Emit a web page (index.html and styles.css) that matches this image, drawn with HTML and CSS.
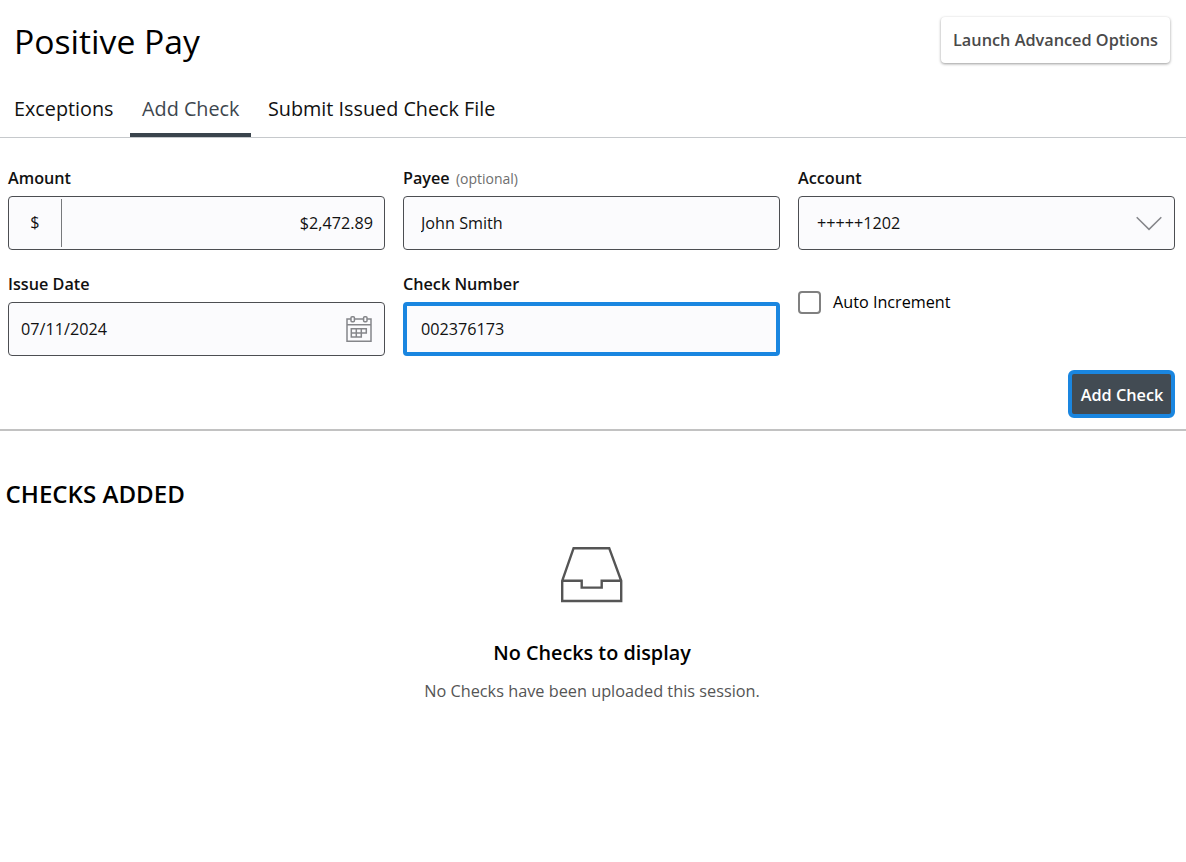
FILE: index.html
```html
<!DOCTYPE html>
<html lang="en">
  <head>
    <meta charset="UTF-8" />
    <meta name="viewport" content="width=device-width, initial-scale=1.0" />
    <title>Positive Pay</title>
    <link rel="stylesheet" href="styles.css">
  </head>
  <body>
    <header class="header">
      <h1>Positive Pay</h1>
      <button type="button" class="btn-launch">Launch Advanced Options</button>
    </header>

    <nav class="tabs">
      <a class="tab">Exceptions</a>
      <a class="tab active">Add Check</a>
      <a class="tab">Submit Issued Check File</a>
    </nav>

    <form class="check-form">
      <div class="form-grid">
        <div class="form-group">
          <label for="amount">Amount</label>
          <div class="field">
            <span class="prefix">$</span>
            <input type="text" id="amount" class="amount" value="$2,472.89" />
          </div>
        </div>
        <div class="form-group">
          <label for="payee">Payee <span class="optional">(optional)</span></label>
          <div class="field">
            <input type="text" id="payee" class="payee" value="John Smith" />
          </div>
        </div>
        <div class="form-group">
          <label for="account">Account</label>
          <div class="field">
            <input type="text" id="account" class="account" value="+++++1202" readonly />
            <svg class="chevron" width="26" height="15" viewBox="0 0 26 15">
              <path d="M0.7 1.2 L13 13.4 L25.3 1.2" />
            </svg>
          </div>
        </div>
        <div class="form-group">
          <label for="issueDate">Issue Date</label>
          <div class="field">
            <input type="text" id="issueDate" class="date" value="07/11/2024" />
            <svg class="calendar" width="26" height="26" viewBox="0 0 26 26">
              <path d="M5 3H1V25.2H25V3H21M8.5 3H17.5M1 8.7H25" />
              <rect x="5" y="0.8" width="3.4" height="5" rx="1" />
              <rect x="17.6" y="0.8" width="3.4" height="5" rx="1" />
              <path d="M5.3 12.8H20.3V17H15.3V21H5.3ZM5.3 17H15.3M10.3 12.8V21M15.3 12.8V17" />
            </svg>
          </div>
        </div>
        <div class="form-group">
          <label for="checkNumber">Check Number</label>
          <div class="field focused">
            <input type="text" id="checkNumber" class="number" value="002376173" />
          </div>
        </div>
        <label class="checkbox">
          <input type="checkbox" />
          Auto Increment
        </label>
      </div>
      <button type="button" class="btn-add">Add Check</button>
    </form>

    <section class="checks">
      <h2>CHECKS ADDED</h2>
      <div class="empty">
        <svg width="62" height="56" viewBox="0 0 62 56">
          <path d="M1.2 33.8L12.6 1.2H48.2L60.2 33.8V54H1.2ZM1.2 33.8H20.7V40.6H40.7V33.8H60.2" />
        </svg>
        <h3>No Checks to display</h3>
        <p>No Checks have been uploaded this session.</p>
      </div>
    </section>
  </body>
</html>
```

FILE: styles.css
```css
* {
  box-sizing: border-box;
}
body {
  margin: 0;
  font-family: "Open Sans", "Noto Sans", sans-serif;
  font-size: 16.2px;
  color: #111;
  background-color: #fff;
}
h1,
h2,
h3,
p {
  margin: 0;
}
svg {
  fill: none;
  stroke: #85868a;
  stroke-width: 1.5;
  flex-shrink: 0;
}
.header {
  display: flex;
  justify-content: space-between;
  align-items: flex-start;
  height: 81px;
  padding: 17px 16px 0 14px;
}
h1 {
  font-size: 33.7px;
  font-weight: 400;
  line-height: 48px;
  color: #000;
}
.btn-launch {
  width: 229px;
  height: 46px;
  padding: 0 0 1px;
  font-family: inherit;
  font-size: 16.3px;
  font-weight: 600;
  color: #4a4a4a;
  background: #fff;
  border: none;
  border-radius: 4px;
  box-shadow: 0 1px 3px rgba(0, 0, 0, 0.4);
}
.tabs {
  display: flex;
  gap: 4.5px;
  height: 57px;
  padding-left: 2px;
  border-bottom: 1px solid #c6c9cc;
}
.tab {
  height: 56px;
  padding: 0 12px;
  font-size: 19.8px;
  line-height: 56px;
}
.tab.active {
  color: #3d464e;
  border-bottom: 4px solid #3a444c;
}
.check-form {
  display: flex;
  flex-direction: column;
  height: 293px;
  padding: 30px 11px 0 8px;
  border-bottom: 2px solid #c2c2c2;
}
.form-grid {
  display: grid;
  grid-template-columns: repeat(3, 1fr);
  gap: 24px 18px;
}
.form-group label {
  display: block;
  height: 28px;
  font-size: 16.2px;
  font-weight: 600;
  line-height: 21px;
}
.form-group .optional {
  margin-left: 2px;
  font-size: 14px;
  font-weight: 400;
  color: #6e6e6e;
}
.field {
  display: flex;
  align-items: center;
  height: 54px;
  background-color: #fbfbfd;
  border: 1.5px solid #4c4e52;
  border-radius: 4px;
}
.field.focused {
  border: 4px solid #1a86e0;
}
.field input {
  flex: 1;
  min-width: 0;
  height: 100%;
  padding: 0 0 1px;
  font-family: inherit;
  font-size: 16.2px;
  color: #111;
  background: none;
  border: none;
  outline: none;
}
.prefix {
  width: 53px;
  height: 48px;
  line-height: 47px;
  text-align: center;
  border-right: 1px solid #77797c;
}
.field .amount {
  padding-right: 11px;
  text-align: right;
}
.field .payee {
  padding-left: 17px;
}
.field .account {
  padding-left: 18px;
}
.field .date {
  padding-left: 12px;
}
.field .number {
  padding-left: 14px;
}
.chevron,
.calendar {
  margin-right: 12px;
}
.checkbox {
  display: flex;
  align-items: center;
  gap: 12px;
  height: 24px;
  margin-top: 16px;
  color: #000;
}
.checkbox input {
  width: 23px;
  height: 23px;
  margin: 0;
  appearance: none;
  background: #fff;
  border: 2px solid #808080;
  border-radius: 4px;
}
.btn-add {
  align-self: flex-end;
  width: 107px;
  height: 48px;
  margin-top: 14px;
  padding: 2px 0 0 1px;
  font-family: inherit;
  font-size: 16.3px;
  font-weight: 600;
  color: #fff;
  background: #424b53;
  border: 4px solid #1a86e0;
  border-radius: 6px;
}
.checks h2 {
  padding: 46px 0 0 5.5px;
  font-size: 24.1px;
  font-weight: 600;
  line-height: 34px;
  color: #000;
}
.empty {
  display: flex;
  flex-direction: column;
  align-items: center;
  padding: 36px 2px 0 0;
}
.empty svg {
  stroke: #555;
  stroke-width: 2.4;
}
.empty h3 {
  margin-top: 36px;
  font-size: 19.8px;
  font-weight: 600;
  line-height: 28px;
  color: #000;
}
.empty p {
  margin-top: 12px;
  font-size: 16.3px;
  line-height: 24px;
  color: #555;
}
```
